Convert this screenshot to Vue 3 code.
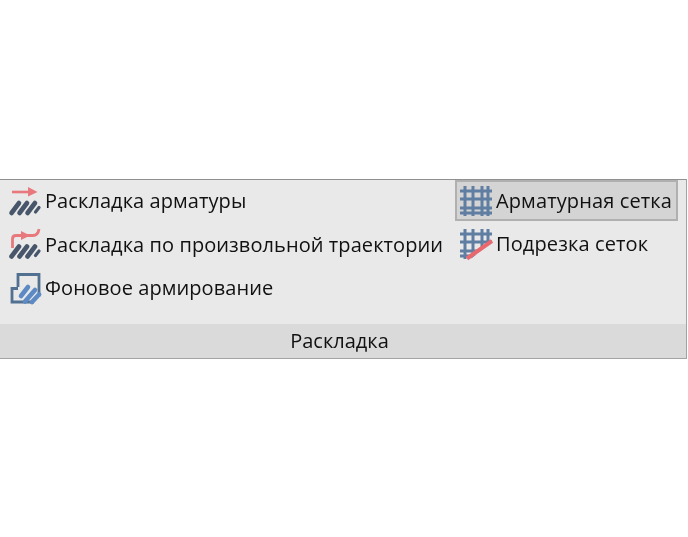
<script setup>
const leftRows = [
  { id: 'a', label: 'Раскладка арматуры' },
  { id: 'b', label: 'Раскладка по произвольной траектории' },
  { id: 'c', label: 'Фоновое армирование' },
]
const rightRows = [
  { id: 'd', label: 'Арматурная сетка', active: true },
  { id: 'e', label: 'Подрезка сеток' },
]
</script>

<template>
  <div class="page">
    <section class="panel">
      <div class="body">
        <div class="col left">
          <div v-for="r in leftRows" :key="r.id" class="row">
            <svg class="ico" viewBox="0 0 34 34" width="34" height="34">
              <template v-if="r.id === 'a'">
                <path d="M4 7H22" stroke="#e8787c" stroke-width="2.600" fill="none" />
                <path d="M20 2L29.500 7L20 11.500Z" fill="#e8787c" />
              </template>
              <template v-if="r.id === 'b'">
                <path d="M4.500 19V10Q4.500 6.500 8 6.500H25Q30 6.500 31 0" stroke="#e8787c" stroke-width="2.800" fill="none" />
                <path d="M13 2L22 6.500L13 11Z" fill="#e8787c" />
              </template>
              <template v-if="r.id === 'a' || r.id === 'b'">
                <g stroke="#47566a" stroke-width="4.600" stroke-linecap="round" :transform="r.id === 'b' ? 'translate(0 -0.5)' : ''">
                  <path d="M3.500 28L11 18" />
                  <path d="M11.500 28L19 18" />
                  <path d="M19.500 28L27 18" />
                  <path d="M27.500 27L31 22.500" stroke-width="3.200" />
                </g>
              </template>
              <template v-if="r.id === 'c'">
                <path d="M10 15V2.500H31V24.500M10 16.500H4V30H26" stroke="#52708f" stroke-width="2.800" fill="none" />
                <g stroke="#5d8ac4" stroke-width="4.600" stroke-linecap="round">
                  <path d="M13 24L20 15" />
                  <path d="M17 29.500L27 18" />
                  <path d="M24 30L31 22.500" />
                </g>
              </template>
            </svg>
            <span class="label">{{ r.label }}</span>
          </div>
        </div>
        <div class="col right">
          <div v-for="r in rightRows" :key="r.id" class="row" :class="{ active: r.active }">
            <svg class="ico" viewBox="0 0 34 34" width="34" height="34">
              <g stroke="#5f7ea1" stroke-width="3" fill="none">
                <path d="M6 2V32M14 2V32M23 2V32M29 2V32" />
                <path d="M1 7H33M1 15H33M1 24H33M1 29H33" />
              </g>
              <template v-if="r.id === 'e'">
                <path d="M8 35H34V14Z" fill="#e9e9e9" />
                <path d="M8 31.500L33 14" stroke="#e8686e" stroke-width="4" />
              </template>
            </svg>
            <span class="label">{{ r.label }}</span>
          </div>
        </div>
      </div>
      <footer class="foot">Раскладка</footer>
    </section>
  </div>
</template>

<style>
html, body { background: #fff; margin: 0; }
</style>

<style scoped>
.page {
  width: 688px;
  height: 537px;
  padding-top: 179px;
  box-sizing: border-box;
  font-family: "Open Sans", "Noto Sans", sans-serif;
  color: #111;
  filter: blur(0.5px);
}
.panel {
  width: 687px;
  height: 180px;
  box-sizing: border-box;
  border: 1px solid #a3a3a3;
  border-top: 1px solid #909090;
  border-left: 0;
  background: #e9e9e9;
  display: flex;
  flex-direction: column;
}
.body {
  flex: 1;
  display: flex;
}
.col {
  display: flex;
  flex-direction: column;
}
.left {
  width: 455px;
  padding: 1px 0 0 8px;
  box-sizing: border-box;
  gap: 1.500px;
}
.left .label {
  margin-bottom: 3px;
}
.row {
  display: flex;
  align-items: center;
  gap: 3px;
  height: 42px;
  white-space: nowrap;
}
.right .row {
  width: 223px;
  height: 41px;
  padding-left: 2px;
  box-sizing: border-box;
  border: 2px solid transparent;
  margin-bottom: 2px;
}
.right .row.active {
  background: #d4d4d4;
  border-color: #b0b0b0;
}
.right .label {
  letter-spacing: 0.12px;
}
.ico {
  flex: none;
}
.label {
  font-size: 20px;
  letter-spacing: 0.08px;
}
.foot {
  height: 34px;
  background: #dadada;
  text-align: center;
  font-size: 20px;
  line-height: 33px;
  padding-right: 7px;
}
</style>
